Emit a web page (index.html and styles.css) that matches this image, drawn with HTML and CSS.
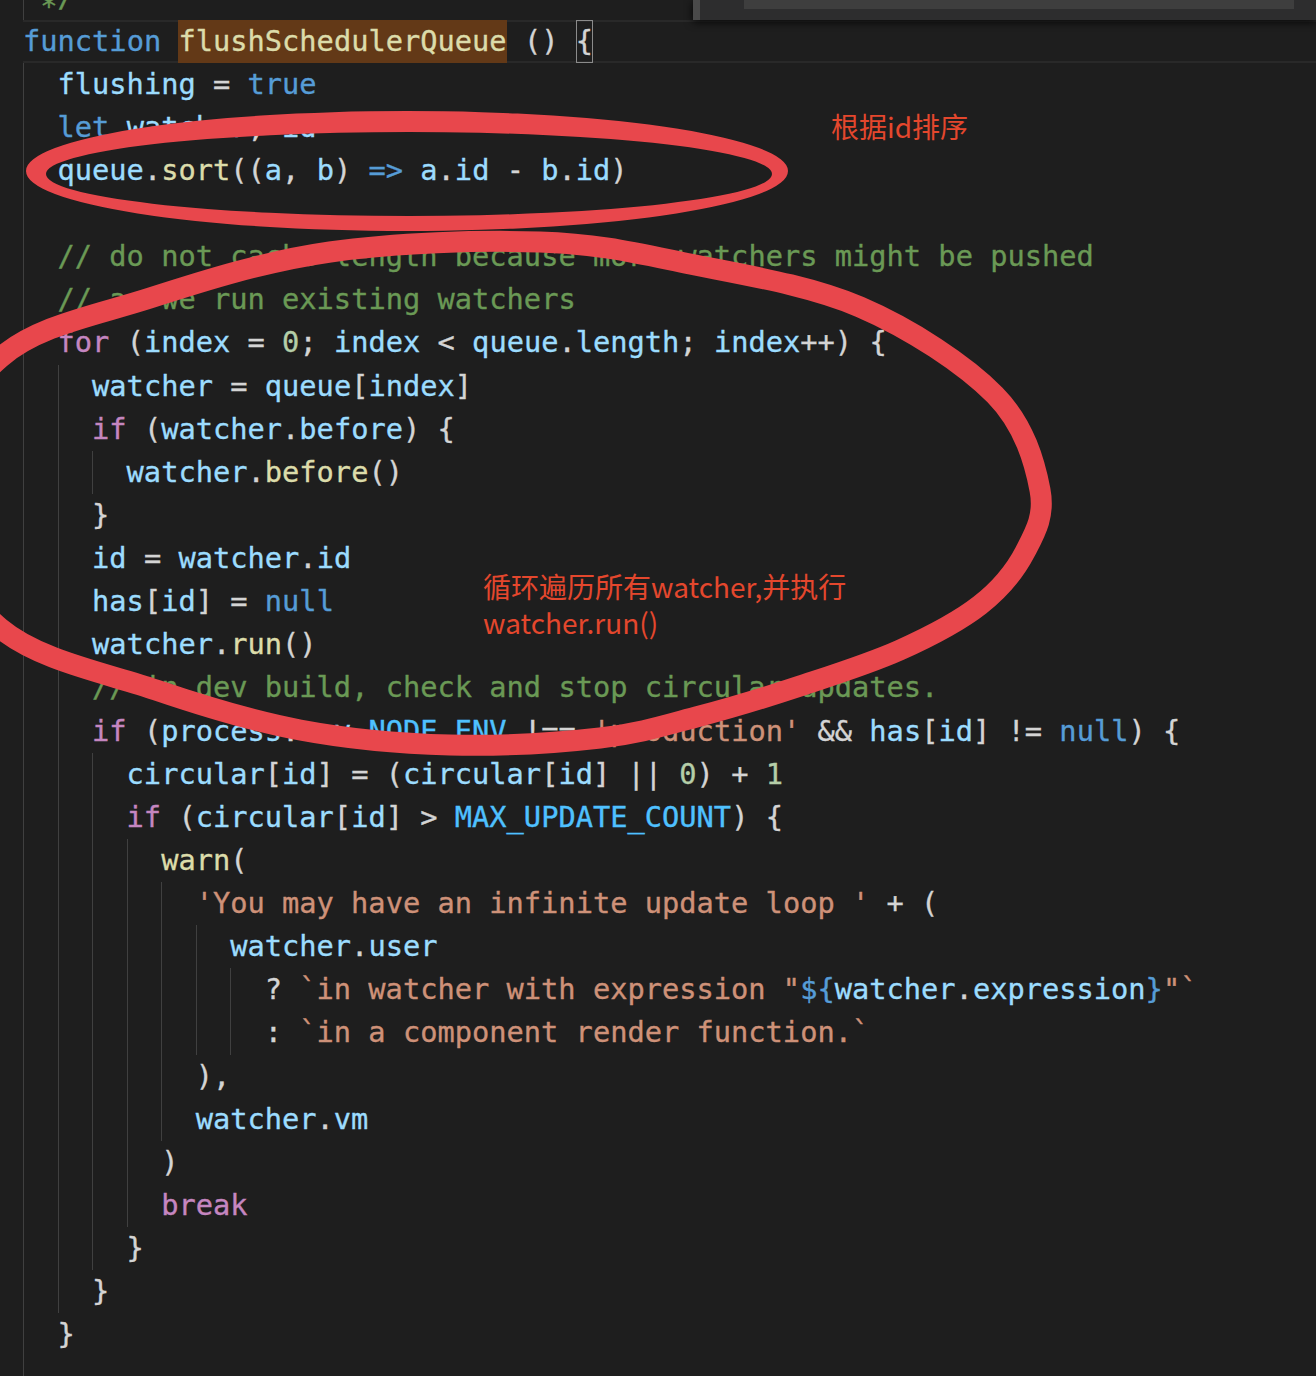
FILE: index.html
```html
<!DOCTYPE html>
<html lang="zh">
<head>
  <meta charset="UTF-8">
  <title>flushSchedulerQueue</title>
  <link rel="stylesheet" href="styles.css">
</head>
<body>
  <div class="editor">
    <div class="code">
      <div class="ln"><i class="g g1"></i><span class="m"><span class="ast">*</span>/</span></div>
      <div class="ln cur"><span class="k">function</span> <span class="f hl">flushSchedulerQueue</span> () <span class="bm">{</span></div>
      <div class="ln"><i class="g"></i><span class="v">flushing</span> = <span class="k">true</span></div>
      <div class="ln"><i class="g"></i><span class="k">let</span> <span class="v">watcher</span>, <span class="v">id</span></div>
      <div class="ln"><i class="g"></i><span class="v">queue</span>.<span class="f">sort</span>((<span class="v">a</span>, <span class="v">b</span>) <span class="k">=&gt;</span> <span class="v">a</span>.<span class="v">id</span> - <span class="v">b</span>.<span class="v">id</span>)</div>
      <div class="ln"><i class="g"></i></div>
      <div class="ln"><i class="g"></i><span class="m">// do not cache length because more watchers might be pushed</span></div>
      <div class="ln"><i class="g"></i><span class="m">// as we run existing watchers</span></div>
      <div class="ln"><i class="g"></i><span class="c">for</span> (<span class="v">index</span> = <span class="n">0</span>; <span class="v">index</span> &lt; <span class="v">queue</span>.<span class="v">length</span>; <span class="v">index</span>++) {</div>
      <div class="ln"><i class="g"></i><i class="g"></i><span class="v">watcher</span> = <span class="v">queue</span>[<span class="v">index</span>]</div>
      <div class="ln"><i class="g"></i><i class="g"></i><span class="c">if</span> (<span class="v">watcher</span>.<span class="v">before</span>) {</div>
      <div class="ln"><i class="g"></i><i class="g"></i><i class="g"></i><span class="v">watcher</span>.<span class="f">before</span>()</div>
      <div class="ln"><i class="g"></i><i class="g"></i>}</div>
      <div class="ln"><i class="g"></i><i class="g"></i><span class="v">id</span> = <span class="v">watcher</span>.<span class="v">id</span></div>
      <div class="ln"><i class="g"></i><i class="g"></i><span class="v">has</span>[<span class="v">id</span>] = <span class="k">null</span></div>
      <div class="ln"><i class="g"></i><i class="g"></i><span class="v">watcher</span>.<span class="f">run</span>()</div>
      <div class="ln"><i class="g"></i><i class="g"></i><span class="m">// in dev build, check and stop circular updates.</span></div>
      <div class="ln"><i class="g"></i><i class="g"></i><span class="c">if</span> (<span class="v">process</span>.<span class="v">env</span>.<span class="t">NODE_ENV</span> !== <span class="s">'production'</span> &amp;&amp; <span class="v">has</span>[<span class="v">id</span>] != <span class="k">null</span>) {</div>
      <div class="ln"><i class="g"></i><i class="g"></i><i class="g"></i><span class="v">circular</span>[<span class="v">id</span>] = (<span class="v">circular</span>[<span class="v">id</span>] || <span class="n">0</span>) + <span class="n">1</span></div>
      <div class="ln"><i class="g"></i><i class="g"></i><i class="g"></i><span class="c">if</span> (<span class="v">circular</span>[<span class="v">id</span>] &gt; <span class="t">MAX_UPDATE_COUNT</span>) {</div>
      <div class="ln"><i class="g"></i><i class="g"></i><i class="g"></i><i class="g"></i><span class="f">warn</span>(</div>
      <div class="ln"><i class="g"></i><i class="g"></i><i class="g"></i><i class="g"></i><i class="g"></i><span class="s">'You may have an infinite update loop '</span> + (</div>
      <div class="ln"><i class="g"></i><i class="g"></i><i class="g"></i><i class="g"></i><i class="g"></i><i class="g"></i><span class="v">watcher</span>.<span class="v">user</span></div>
      <div class="ln"><i class="g"></i><i class="g"></i><i class="g"></i><i class="g"></i><i class="g"></i><i class="g"></i><i class="g"></i>? <span class="s">`in watcher with expression "</span><span class="k">${</span><span class="v">watcher</span>.<span class="v">expression</span><span class="k">}</span><span class="s">"`</span></div>
      <div class="ln"><i class="g"></i><i class="g"></i><i class="g"></i><i class="g"></i><i class="g"></i><i class="g"></i><i class="g"></i>: <span class="s">`in a component render function.`</span></div>
      <div class="ln"><i class="g"></i><i class="g"></i><i class="g"></i><i class="g"></i><i class="g"></i>),</div>
      <div class="ln"><i class="g"></i><i class="g"></i><i class="g"></i><i class="g"></i><i class="g"></i><span class="v">watcher</span>.<span class="v">vm</span></div>
      <div class="ln"><i class="g"></i><i class="g"></i><i class="g"></i><i class="g"></i>)</div>
      <div class="ln"><i class="g"></i><i class="g"></i><i class="g"></i><i class="g"></i><span class="c">break</span></div>
      <div class="ln"><i class="g"></i><i class="g"></i><i class="g"></i>}</div>
      <div class="ln"><i class="g"></i><i class="g"></i>}</div>
      <div class="ln"><i class="g"></i>}</div>
      <div class="ln"><i class="g"></i></div>
    </div>

    <!-- find widget, mostly scrolled off the top -->
    <div class="find"><div class="find-input"></div></div>

    <!-- hand drawn marks -->
    <svg class="marks" width="1316" height="1376" viewBox="0 0 1316 1376">
      <path class="fill" fill-rule="evenodd" d="M26 171a381 60 0 1 0 762 0a381 60 0 1 0 -762 0Z M46 174a363 42 0 1 0 726 0a363 42 0 1 0 -726 0Z"/>
      <path class="loop" d="M-75 495 C-75 450 -37.5 390.8 0 358 C37.5 325.2 95 315.7 150 298 C205 280.3 265 261.3 330 252 C395 242.7 480 240 540 242 C600 244 636.7 253.2 690 264 C743.3 274.8 809.2 285.2 860 307 C910.8 328.8 965 364.5 995 395 C1025 425.5 1035 463.8 1040 490 C1045 516.2 1035 532.8 1025 552 C1015 571.2 1000.8 588.7 980 605 C959.2 621.3 930 636.5 900 650 C870 663.5 833.3 675 800 686 C766.7 697 733.3 707.3 700 716 C666.7 724.7 641.7 733.2 600 738 C558.3 742.8 500 746.3 450 745 C400 743.7 349 739.2 300 730 C251 720.8 206 707 156 690 C106 673 38.5 660.5 0 628 C-38.5 595.5 -75 540 -75 495 Z"/>
    </svg>

    <p class="note note-sort">根据id排序</p>
    <p class="note note-loop">循环遍历所有watcher,并执行<br>watcher.run()</p>
  </div>
</body>
</html>
```

FILE: styles.css
```css
html, body {
  margin: 0;
  height: 100%;
}

body {
  background-color: #1e1e1e;
  overflow: hidden;
}

.editor {
  position: relative;
  height: 1376px;
  overflow: hidden;
}

.code {
  margin-top: -23.6px;
  padding-left: 23px;
  font-family: "DejaVu Sans Mono", monospace;
  font-size: 28.7px;
  line-height: 43.13px;
  color: #d4d4d4;
  -webkit-text-stroke-width: 0.35px;
}

.ln {
  white-space: pre;
  height: 43.13px;
}

/* menlo keeps the asterisk lower than dejavu */
.ast {
  vertical-align: -9px;
}

/* current line */
.cur {
  box-shadow: inset 0 2px #292929, inset 0 -2px #292929;
}

/* indent guides */
.g {
  display: inline-block;
  width: 2ch;
  height: 43.13px;
  vertical-align: top;
  box-shadow: inset 1px 0 #404040;
}

.g1 {
  width: 1ch;
}

/* tokens */
.k { color: #569cd6; }
.c { color: #c586c0; }
.v { color: #9cdcfe; }
.f { color: #dcdcaa; }
.s { color: #ce9178; }
.n { color: #b5cea8; }
.m { color: #6a9955; }
.t { color: #4fc1ff; }

.hl {
  display: inline-block;
  vertical-align: top;
  background-color: #633917;
}

.bm {
  display: inline-block;
  vertical-align: top;
  box-shadow: inset 0 0 0 1px #8b8b8b;
}

/* find widget */
.find {
  position: absolute;
  top: 0;
  left: 693px;
  right: 0;
  height: 20px;
  padding: 0 22px 0 44px;
  background-color: #2d2d2e;
  border-left: 7px solid #4a4a4a;
  box-shadow: 0 2px 8px rgba(0, 0, 0, 0.85);
}

.find-input {
  height: 9px;
  background-color: #3e3e3e;
}

/* annotations */
.marks {
  position: absolute;
  top: 0;
  left: 0;
}

.marks .fill {
  fill: #e8474c;
}

.marks .loop {
  fill: none;
  stroke: #e8474c;
  stroke-width: 21;
}

.note {
  position: absolute;
  margin: 0;
  font-family: "Noto Sans CJK SC", sans-serif;
  font-size: 28px;
  line-height: 36px;
  color: #e4472d;
  white-space: nowrap;
}

.note-sort {
  left: 831px;
  top: 108px;
}

.note-loop {
  left: 483px;
  top: 568px;
}
```
